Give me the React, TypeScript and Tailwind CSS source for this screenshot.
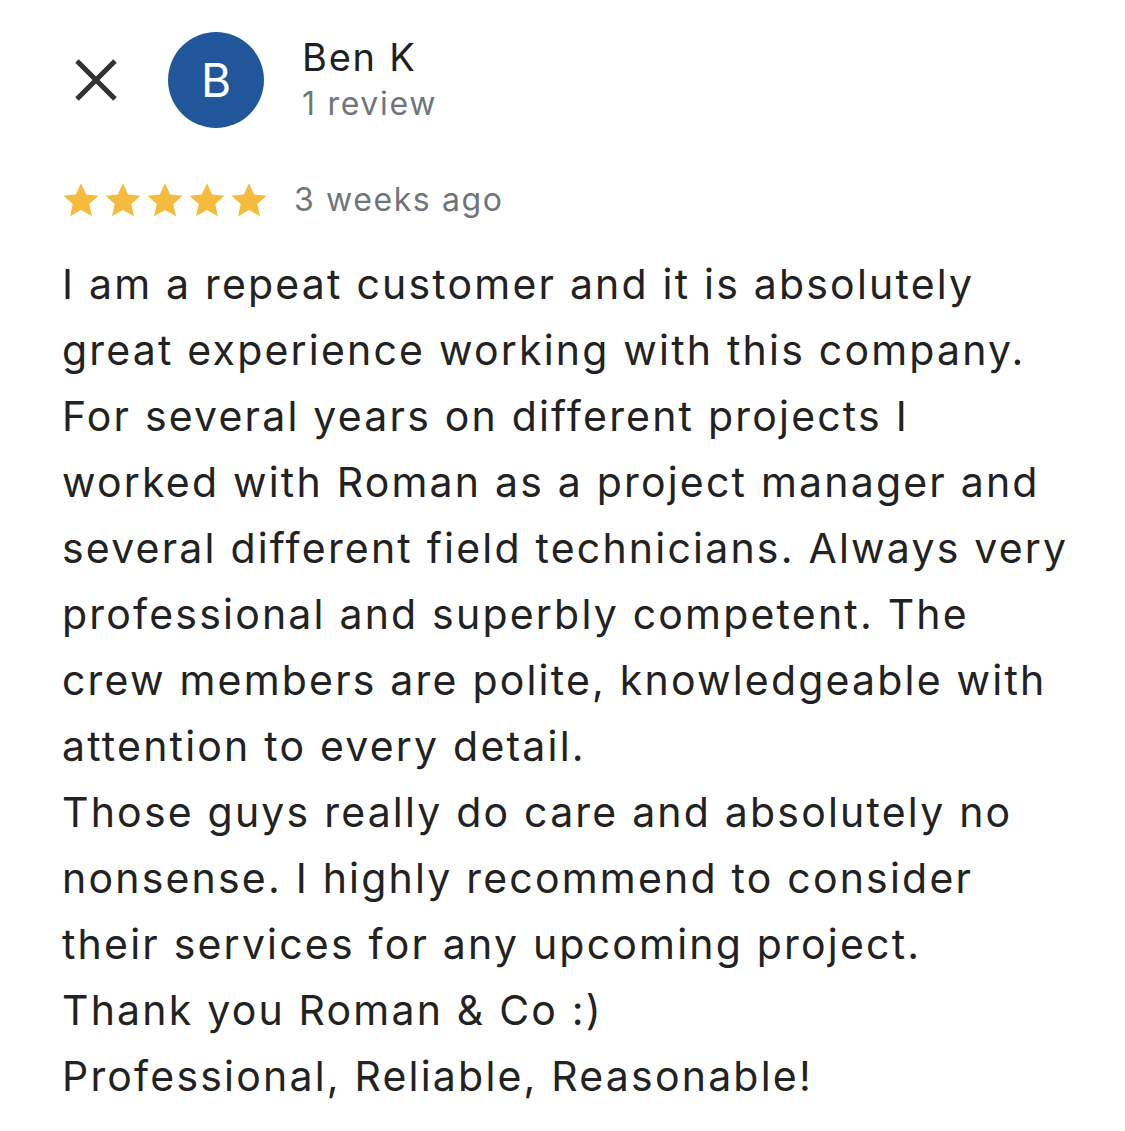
import React from "react";

const Star = () => (
  <svg width="38" height="36" viewBox="0 0 24 23" className="block">
    <path d="M12 0.8l3.3 7.2 7.9 0.8-5.9 5.3 1.7 7.8L12 17.9l-7 4 1.7-7.8L0.8 8.8l7.9-0.8z" fill="#F4BB3D" />
  </svg>
);

export default function App() {
  const lines = [
    "I am a repeat customer and it is absolutely",
    "great experience working with this company.",
    "For several years on different projects I",
    "worked with Roman as a project manager and",
    "several different field technicians. Always very",
    "professional and superbly competent. The",
    "crew members are polite, knowledgeable with",
    "attention to every detail.",
    "Those guys really do care and absolutely no",
    "nonsense. I highly recommend to consider",
    "their services for any upcoming project.",
    "Thank you Roman & Co :)",
    "Professional, Reliable, Reasonable!",
  ];
  return (
    <div className="w-[1125px] h-[1131px] bg-white overflow-hidden" style={{ fontFamily: "Inter, 'Noto Sans', sans-serif" }}>
      <div className="flex items-center pt-[32px] pl-[72px]">
        <svg width="48" height="48" viewBox="0 0 48 48" className="block">
          <path d="M5 5L43 43M43 5L5 43" stroke="#333333" strokeWidth="5" />
        </svg>
        <div className="ml-[48px] w-[96px] h-[96px] rounded-full bg-[#22569B] flex items-center justify-center text-white text-[46px] leading-none">
          B
        </div>
        <div className="ml-[38px] flex flex-col">
          <div className="text-[38px] leading-[44px] text-[#1f1f1f] tracking-[1.8px]">Ben K</div>
          <div className="mt-[3px] text-[32px] leading-[44px] text-[#70757a] tracking-[1.7px]">1 review</div>
        </div>
      </div>
      <div className="flex items-center pl-[62px] mt-[52px]">
        <div className="flex gap-[4px]">
          <Star />
          <Star />
          <Star />
          <Star />
          <Star />
        </div>
        <div className="ml-[26px] text-[32px] leading-[40px] text-[#70757a] tracking-[1.6px]">3 weeks ago</div>
      </div>
      <div className="pl-[62px] mt-[31px] text-[41px] leading-[66px] text-[#222222] whitespace-nowrap tracking-[2.2px]">
        {lines.map((l, i) => (
          <div key={i}>{l}</div>
        ))}
      </div>
    </div>
  );
}
